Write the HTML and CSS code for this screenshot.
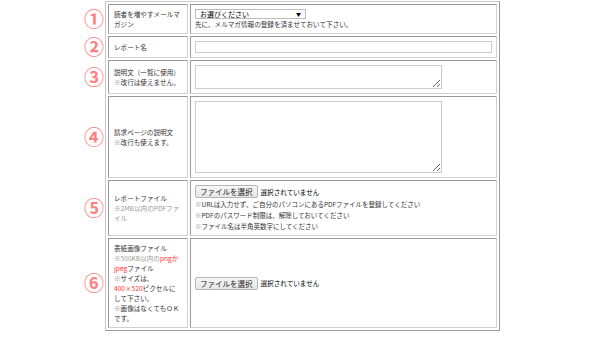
FILE: index.html
```html
<!DOCTYPE html>
<html lang="ja">
<head>
    <meta charset="UTF-8">
    <title>レポート登録</title>
    <link rel="stylesheet" href="styles.css">
</head>
<body>
    <table class="form-table">
        <colgroup>
            <col class="col-label">
            <col>
        </colgroup>
        <tr>
            <td class="label"><span class="num">①</span>読者を増やすメールマガジン</td>
            <td class="field">
                <span class="select-wrap">
                    <select class="select">
                        <option>お選びください</option>
                    </select>
                </span>
                <div>先に、メルマガ情報の登録を済ませておいて下さい。</div>
            </td>
        </tr>
        <tr>
            <td class="label"><span class="num">②</span>レポート名</td>
            <td class="field"><input type="text" class="text-input"></td>
        </tr>
        <tr>
            <td class="label"><span class="num">③</span>説明文（一覧に使用）<br><span class="note">※</span>改行は使えません。</td>
            <td class="field"><textarea class="area small"></textarea></td>
        </tr>
        <tr>
            <td class="label"><span class="num">④</span>請求ページの説明文<br><span class="note">※</span>改行も使えます。</td>
            <td class="field"><textarea class="area large"></textarea></td>
        </tr>
        <tr>
            <td class="label"><span class="num">⑤</span>レポートファイル<br><span class="note">※2MB以内のPDFファイル</span></td>
            <td class="field">
                <label class="file">
                    <input type="file" class="file-input">
                    <span class="file-btn">ファイルを選択</span>
                    <span class="file-name">選択されていません</span>
                </label>
                <div class="hint"><span class="note">※</span>URLは入力せず、ご自分のパソコンにあるPDFファイルを登録してください</div>
                <div class="hint"><span class="note">※</span>PDFのパスワード制限は、解除しておいてください</div>
                <div class="hint"><span class="note">※</span>ファイル名は半角英数字にしてください</div>
            </td>
        </tr>
        <tr>
            <td class="label"><span class="num">⑥</span>表紙画像ファイル<br><span class="note">※500KB以内の</span><span class="red">pngか<br>jpeg</span>ファイル<br><span class="note">※</span>サイズは、<br><span class="red">400×520</span>ピクセルに<br>して下さい。<br><span class="note">※</span>画像はなくてもＯＫ<br>です。</td>
            <td class="field">
                <label class="file">
                    <input type="file" class="file-input">
                    <span class="file-btn">ファイルを選択</span>
                    <span class="file-name">選択されていません</span>
                </label>
            </td>
        </tr>
    </table>
</body>
</html>
```

FILE: styles.css
```css
* {
    box-sizing: border-box;
}

body {
    margin: 0;
    padding: 1px 0 0 105px;
    background: #fff;
    color: #333;
    font-family: "Noto Sans CJK JP", sans-serif;
    font-size: 6.6px;
    line-height: 10px;
}

.form-table {
    width: 395px;
    table-layout: fixed;
    border-collapse: separate;
    border-spacing: 2px;
    border: 1px solid;
    border-color: #c8c8c8 #999 #999 #c8c8c8;
}

.col-label {
    width: 80px;
}

.form-table td {
    border: 1px solid;
    border-color: #999 #d0d0d0 #d0d0d0 #999;
    vertical-align: middle;
}

.label {
    position: relative;
    padding: 4px 4px 4px 5px;
}

.field {
    padding: 4px 4px;
}

.num {
    position: absolute;
    left: -25px;
    top: 50%;
    transform: translateY(-50%);
    font-size: 20px;
    font-weight: bold;
    line-height: 20px;
    color: #ff8080;
}

.note {
    color: #a09898;
}

.red {
    color: #ff3030;
}

.select-wrap {
    position: relative;
    display: inline-block;
}

.select-wrap::after {
    content: "▼";
    position: absolute;
    right: 5px;
    top: 2px;
    font-size: 5px;
    line-height: 6px;
    color: #000;
    pointer-events: none;
}

.select {
    appearance: none;
    width: 111px;
    height: 10px;
    padding: 0 4px;
    border: 1px solid #bbb;
    border-radius: 0;
    background: #fff;
    font-family: inherit;
    font-size: 7px;
    line-height: 8px;
    color: #000;
}

.text-input {
    display: block;
    width: 100%;
    height: 12px;
    border: 1px solid #ccc;
    border-radius: 0;
}

.area {
    display: block;
    width: 247px;
    border: 1px solid #ccc;
    border-radius: 0;
    resize: vertical;
}

.area.small {
    height: 24px;
}

.area.large {
    height: 72px;
}

.file {
    display: flex;
    align-items: center;
    gap: 3px;
    color: #000;
}

.file-input {
    display: none;
}

.file-btn {
    display: inline-block;
    height: 13px;
    padding: 0 4px;
    border: 1px solid #b5b5b5;
    border-radius: 2px;
    background: linear-gradient(#f6f6f6, #e6e6e6);
    font-size: 7.5px;
    line-height: 11px;
    color: #222;
}

.hint {
    margin-top: 1px;
    font-size: 6.5px;
}
```
